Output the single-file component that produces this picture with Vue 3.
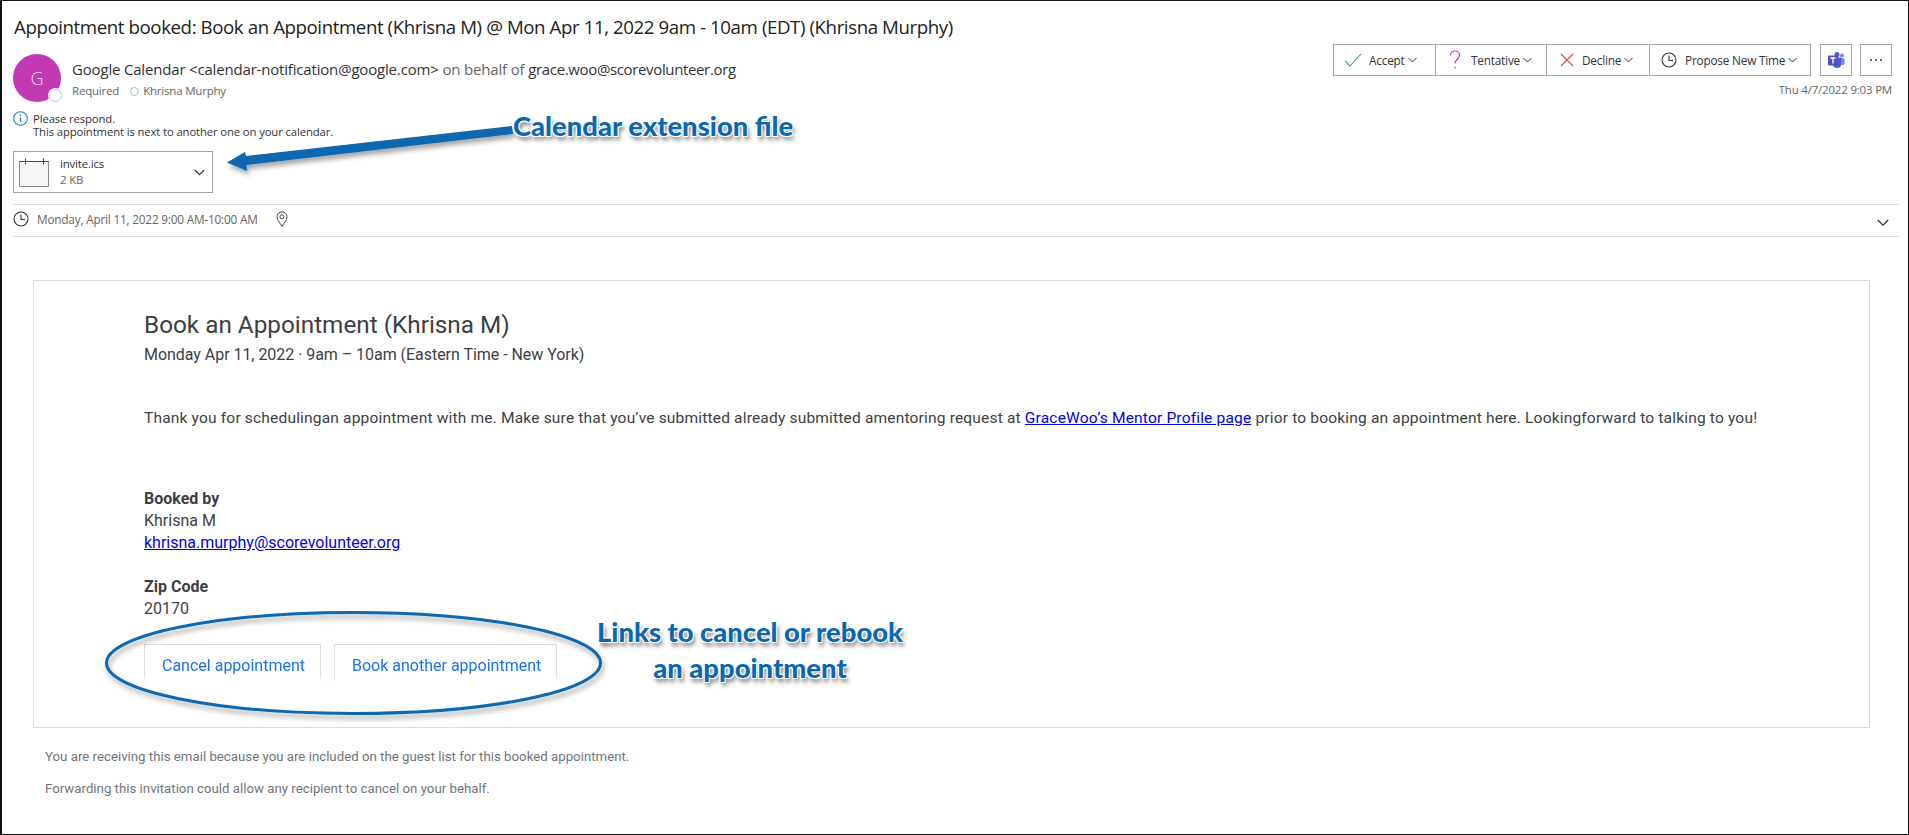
<script setup>
const actions = [
  { label: 'Accept', cls: 'a1' },
  { label: 'Tentative', cls: 'a2' },
  { label: 'Decline', cls: 'a3' },
  { label: 'Propose New Time', cls: 'a4' }
]
</script>

<template>
  <div class="page">
    <h1 class="subject">Appointment booked: Book an Appointment (Khrisna M) @ Mon Apr 11, 2022 9am - 10am (EDT) (Khrisna Murphy)</h1>

    <div class="head">
      <div class="avatar">G<span class="presence"></span></div>
      <div class="who">
        <div class="sender"><span class="from">Google Calendar &lt;calendar-notification@google.com&gt;</span> <span class="muted from">on behalf of</span> <span class="behalf">grace.woo@scorevolunteer.org</span></div>
        <div class="req"><span class="muted">Required</span><i class="dot"></i><span class="muted">Khrisna Murphy</span></div>
      </div>
      <div class="right">
        <div class="tools">
          <div class="group">
            <button v-for="a in actions" :key="a.label" class="act" :class="a.cls">
              <svg v-if="a.cls === 'a1'" width="18" height="14" viewBox="0 0 18 14"><path d="M1 8l5 5L17 1" fill="none" stroke="#3fa45c" stroke-width="1.1"/></svg>
              <svg v-else-if="a.cls === 'a2'" width="12" height="20" viewBox="0 0 12 20"><path d="M1.5 5.5C1.5 2.8 3.5 1 6 1s4.5 1.8 4.5 4.3c0 2.2-1.3 3.3-2.6 4.4C6.700 10.700 6 11.700 6 13.500M6 16.800V18.500" fill="none" stroke="#a843b5" stroke-width="1.200"/></svg>
              <svg v-else-if="a.cls === 'a3'" width="14" height="14" viewBox="0 0 14 14"><path d="M1 1l12 12M13 1L1 13" fill="none" stroke="#dc4a45" stroke-width="1.100"/></svg>
              <svg v-else width="16" height="16" viewBox="0 0 16 16"><circle cx="8" cy="8" r="7" fill="none" stroke="#333" stroke-width="1.100"/><path d="M8 3.500V8.500H12" fill="none" stroke="#333" stroke-width="1.100"/></svg>
              <span>{{ a.label }}</span>
              <svg class="chev" width="9" height="6" viewBox="0 0 9 6"><path d="M.5 1l4 4 4-4" fill="none" stroke="#333" stroke-width="1"/></svg>
            </button>
          </div>
          <button class="square">
            <svg width="18" height="18" viewBox="0 0 18 18">
              <circle cx="15" cy="4.500" r="2" fill="#7b83eb"/><rect x="11" y="7" width="6.500" height="7" rx="1.500" fill="#7b83eb"/>
              <circle cx="10" cy="3.500" r="2.500" fill="#5059c9"/><path d="M6 6.500h8v6.500a4 4 0 0 1-8 0z" fill="#5059c9"/>
              <rect x="1" y="4.500" width="10" height="10" rx="1" fill="#4b53bc"/>
              <path d="M3.500 7h5M6 7v5.500" stroke="#fff" stroke-width="1.300" fill="none"/>
            </svg>
          </button>
          <button class="square dots"><i></i><i></i><i></i></button>
        </div>
        <div class="stamp">Thu 4/7/2022 9:03 PM</div>
      </div>
    </div>

    <div class="notice">
      <svg width="15" height="15" viewBox="0 0 15 15"><circle cx="7.500" cy="7.500" r="6.800" fill="none" stroke="#1a86c8" stroke-width="1.100"/><path d="M7.500 6.500v4.500M7.500 3.700v1.300" stroke="#1a86c8" stroke-width="1.300"/></svg>
      <div>Please respond.<br>This appointment is next to another one on your calendar.</div>
    </div>

    <div class="attach">
      <svg width="30" height="30" viewBox="0 0 30 30">
        <path d="M.5 4.500h29v25H.500z" fill="#f6f6f6" stroke="#8a8a8a"/>
        <path d="M.5 4.500h29" stroke="#444"/>
        <path d="M6.500 1.500v6M24.500 1.500v6" stroke="#444"/>
      </svg>
      <div class="file"><div>invite.ics</div><div class="muted">2 KB</div></div>
      <svg class="fchev" width="11" height="7" viewBox="0 0 11 7"><path d="M.8 1l4.700 4.700L10.200 1" fill="none" stroke="#333" stroke-width="1.100"/></svg>
    </div>

    <div class="when">
      <svg width="16" height="16" viewBox="0 0 16 16"><circle cx="8" cy="8" r="7" fill="none" stroke="#333" stroke-width="1.100"/><path d="M8 3.500V8.500H12" fill="none" stroke="#333" stroke-width="1.100"/></svg>
      <span class="muted">Monday, April 11, 2022 9:00 AM-10:00 AM</span>
      <svg class="pin" width="12" height="16" viewBox="0 0 12 16"><path d="M6 15.300C3.500 11.500 1 8.800 1 5.800a5 5 0 0 1 10 0c0 3-2.500 5.700-5 9.500z" fill="none" stroke="#444"/><circle cx="6" cy="5.800" r="2" fill="none" stroke="#444"/></svg>
      <svg class="wchev" width="12" height="8" viewBox="0 0 12 8"><path d="M.8 1l5.200 5.200L11.200 1" fill="none" stroke="#333" stroke-width="1.200"/></svg>
    </div>

    <div class="card">
      <h2>Book an Appointment (Khrisna M)</h2>
      <p class="date">Monday Apr 11, 2022 · 9am – 10am (Eastern Time - New York)</p>
      <p class="msg">Thank you for schedulingan appointment with me. Make sure that you’ve submitted already submitted amentoring request at <a href="#">GraceWoo’s Mentor Profile page</a> prior to booking an appointment here. Lookingforward to talking to you!</p>
      <div class="field"><b>Booked by</b><br>Khrisna M<br><a href="#">khrisna.murphy@scorevolunteer.org</a></div>
      <div class="field zip"><b>Zip Code</b><br>20170</div>
      <div class="btns">
        <span class="btn">Cancel appointment</span>
        <span class="btn">Book another appointment</span>
      </div>
    </div>

    <div class="foot">
      <p>You are receiving this email because you are included on the guest list for this booked appointment.</p>
      <p>Forwarding this invitation could allow any recipient to cancel on your behalf.</p>
    </div>

    <svg class="overlay" width="1909" height="835" viewBox="0 0 1909 835">
      <defs>
        <filter id="sh" x="-10%" y="-30%" width="120%" height="170%"><feDropShadow dx="2" dy="4" stdDeviation="2.500" flood-color="#000" flood-opacity=".35"/></filter>
      </defs>
      <path d="M512 126L246 156L245 152L227 162.500L247 171L246.500 165L513 134z" fill="#0b68b0" filter="url(#sh)"/>
      <ellipse cx="353.500" cy="663" rx="247" ry="50.500" fill="none" stroke="#0b68b0" stroke-width="3" filter="url(#sh)"/>
    </svg>
    <div class="note n1">Calendar extension file</div>
    <div class="note n2">Links to cancel or rebook<br>an appointment</div>
  </div>
</template>

<style scoped>
.page {
  position: relative;
  box-sizing: border-box;
  width: 1909px;
  height: 835px;
  border: 1px solid #111;
  border-left-width: 2px;
  background: #fff;
  overflow: hidden;
  font-family: "Open Sans", "Noto Sans", sans-serif;
  color: #333;
}
.muted { color: #666; }
.subject {
  margin: 0;
  padding: 15px 0 0 12px;
  height: 38px;
  box-sizing: content-box;
  font-size: 18.700px;
  line-height: 22px;
  font-weight: 400;
  color: #222;
  letter-spacing: -.42px;
  white-space: nowrap;
}
.head { display: flex; height: 58px; padding-left: 11px; }
.avatar {
  position: relative;
  width: 48px; height: 48px;
  border-radius: 50%;
  background: #c239b3;
  color: #f3dcf0;
  font-size: 18px;
  font-weight: 300;
  display: flex; align-items: center; justify-content: center;
}
.presence {
  position: absolute; right: -1px; bottom: 0;
  width: 13px; height: 13px; border-radius: 50%;
  background: #fff; border: 1.500px solid #a9c9d2;
  box-sizing: border-box;
  box-shadow: 0 0 0 1px #fff;
}
.who { margin-left: 11px; padding-top: 5px; }
.sender { font-size: 15px; line-height: 20px; color: #333; white-space: nowrap; }
.from { letter-spacing: -.18px; }
.behalf { letter-spacing: -.36px; }
.req { display: flex; align-items: center; font-size: 11.500px; line-height: 16px; margin-top: 4px; letter-spacing: -.2px; }
.dot { width: 9px; height: 9px; border: 1px solid #9cc2cc; border-radius: 50%; margin: 0 4px 0 11px; box-sizing: border-box; }
.right { margin-left: auto; margin-right: 16px; margin-top: -10px; }
.tools { display: flex; gap: 9px; }
.group { display: flex; border: 1px solid #a6a6a6; height: 32px; box-sizing: border-box; width: 478px; }
.act {
  display: flex; align-items: center;
  padding: 0; background: #fff; border: 0;
  border-right: 1px solid #a6a6a6;
  font: inherit; font-size: 11.800px; letter-spacing: -.2px; color: #333;
  box-sizing: border-box;
}
.act:last-child { border-right: 0; flex: 1; }
.a1 { width: 102px; padding-left: 10px; }
.a1 span { margin-left: 7px; }
.a2 { width: 111px; padding-left: 13px; }
.a2 span { margin-left: 10px; }
.a3 { width: 103px; padding-left: 13px; }
.a3 span { margin-left: 8px; }
.a4 { padding-left: 11px; }
.a4 span { margin-left: 8px; }
.chev { margin-left: 3px; }
.square {
  width: 32px; height: 32px; padding: 0; box-sizing: border-box;
  background: #fff; border: 1px solid #a6a6a6;
  display: flex; align-items: center; justify-content: center;
}
.dots { gap: 2.500px; margin-left: -1px; }
.dots i { width: 2.500px; height: 2.500px; background: #333; border-radius: 50%; }
.stamp { text-align: right; font-size: 11.500px; line-height: 16px; margin-top: 6px; color: #666; letter-spacing: -.2px; }
.notice { display: flex; font-size: 11.300px; line-height: 13px; color: #333; padding-left: 11px; height: 39px; letter-spacing: -.12px; }
.notice svg { margin: -1px 5px 0 0; flex: none; }
.attach {
  display: flex; align-items: center;
  box-sizing: border-box;
  margin-left: 11px; width: 200px; height: 42px;
  border: 1px solid #a6a6a6;
  padding: 0 0 0 5px;
  font-size: 11.500px; line-height: 16px; letter-spacing: -.2px;
}
.file { margin-left: 11px; }
.fchev { margin-left: auto; margin-right: 7px; }
.when {
  display: flex; align-items: center;
  margin: 11px 0 0 11px; width: 1886px; height: 33px;
  box-sizing: border-box;
  padding-bottom: 3px;
  border-top: 1px solid #ddd; border-bottom: 1px solid #ddd;
  font-size: 11.800px; letter-spacing: -.2px;
}
.when span { margin-left: 8px; }
.pin { margin-left: 18px; }
.wchev { margin-left: auto; margin-right: 10px; margin-top: 8px; }
.card {
  box-sizing: border-box;
  margin: 43px 0 0 31px;
  width: 1837px; height: 448px;
  border: 1px solid #dadce0;
  padding: 30px 0 0 110px;
  font-family: Roboto, sans-serif;
  font-size: 16px;
  line-height: 22px;
  color: #3c4043;
}
.card h2 { margin: 0; font-size: 24.300px; line-height: 28px; font-weight: 400; color: #3c4043; }
.date { margin: 5px 0 0; letter-spacing: -.04px; }
.msg { margin: 41px 0 0; white-space: nowrap; font-size: 15.550px; letter-spacing: .165px; }
.card a { color: #0000ee; }
.field { margin-top: 59px; }
.field b { font-weight: 700; }
.zip { margin-top: 22px; }
.btns { display: flex; gap: 13px; margin-top: 24px; }
.btn {
  box-sizing: border-box;
  height: 40px;
  padding: 10px 15px 0 17px;
  color: #1a73e8;
  border: 1px solid #dadce0; border-bottom: 0;
  -webkit-mask-image: linear-gradient(#000 70%, transparent);
  mask-image: linear-gradient(#000 70%, transparent);
}
.foot { margin: 20px 0 0 43px; font-family: Roboto, sans-serif; font-size: 13.250px; line-height: 18px; color: #70757a; }
.foot p { margin: 0 0 14px; }
.overlay { position: absolute; left: -2px; top: -1px; pointer-events: none; }
.note {
  position: absolute;
  font-family: Lato, sans-serif;
  font-weight: 900;
  color: #0b68b0;
  font-size: 27.400px;
  line-height: 36px;
  text-align: center;
  white-space: nowrap;
  text-shadow: -1px -1px 0 #fff, 1px -1px 0 #fff, -1px 1px 0 #fff, 1px 1px 0 #fff, 2px 4px 4px rgba(0,0,0,.55);
}
.n1 { left: 511px; top: 107px; }
.n2 { left: 595px; top: 613px; }
</style>
